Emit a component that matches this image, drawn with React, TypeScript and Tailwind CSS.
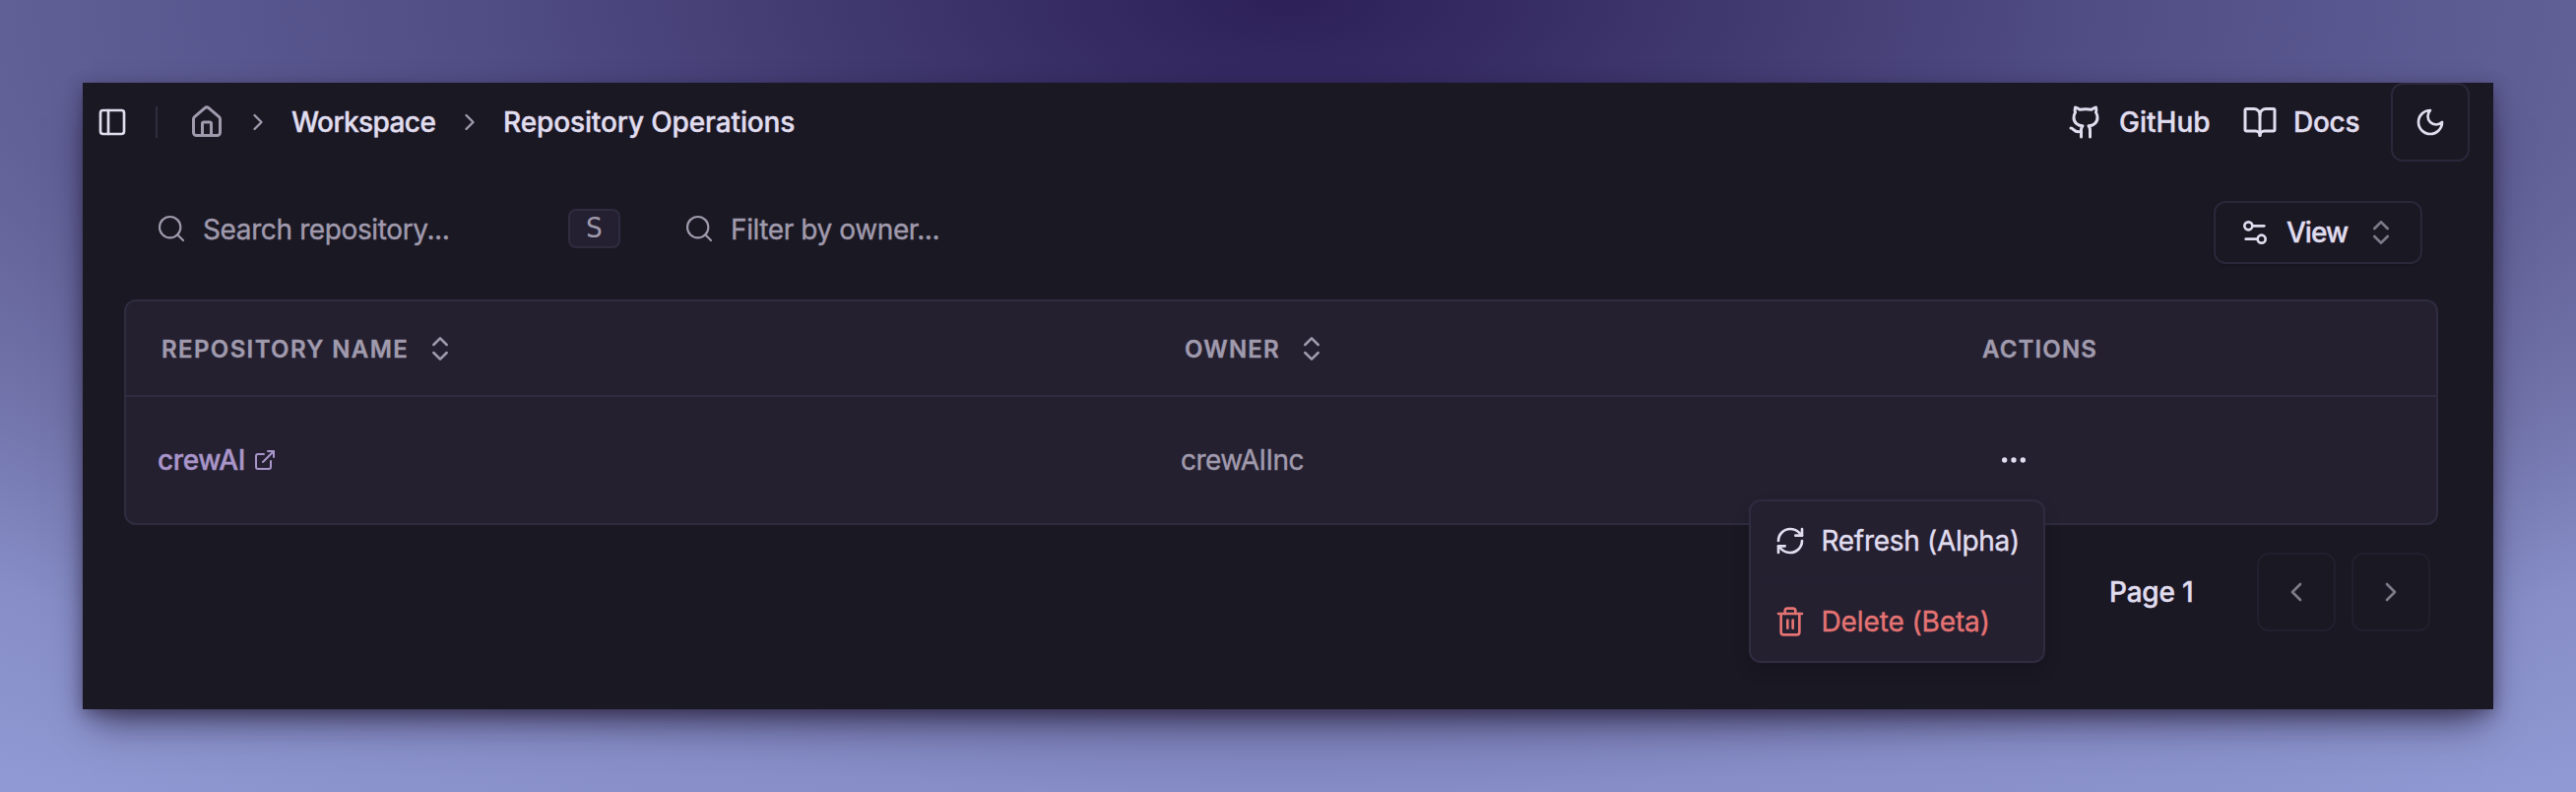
import type { ReactNode } from 'react';
import {
  BookOpen,
  ChevronLeft,
  ChevronRight,
  ChevronsUpDown,
  Ellipsis,
  ExternalLink,
  Github,
  House,
  PanelLeft,
  RefreshCw,
  Search,
  Settings2,
  Trash2,
} from 'lucide-react';

function Moon() {
  return (
    <svg
      viewBox="0 0 24 24"
      fill="none"
      stroke="currentColor"
      strokeWidth="2"
      strokeLinecap="round"
      strokeLinejoin="round"
      className="size-8"
    >
      <path d="M12 3a6 6 0 0 0 9 9 9 9 0 1 1-9-9Z" />
    </svg>
  );
}

function Header() {
  return (
    <header className="flex h-20 items-center justify-between pr-6 pl-3.5 font-medium">
      <div className="flex items-center">
        <PanelLeft className="size-8" />
        <div className="ml-7 h-8 w-0.5 bg-[#302c40]" />
        <nav className="ml-8 flex items-center gap-5">
          <House className="size-9 text-[#a09aad]" />
          <ChevronRight className="size-7 text-[#a09aad]" />
          <span className="w-[147px] tracking-[-0.6px]">Workspace</span>
          <ChevronRight className="size-7 text-[#a09aad]" />
          <span className="tracking-[-0.12px]">Repository Operations</span>
        </nav>
      </div>
      <div className="flex items-center gap-8">
        <a className="flex items-center gap-4">
          <Github className="size-9" />
          <span className="w-[93px]">GitHub</span>
        </a>
        <a className="flex items-center gap-4">
          <BookOpen className="size-9" />
          <span className="w-[67px] tracking-[-0.3px]">Docs</span>
        </a>
        <button className="flex size-20 items-center justify-center rounded-xl border-2 border-[#2a273a]">
          <Moon />
        </button>
      </div>
    </header>
  );
}

function Toolbar() {
  return (
    <div className="mt-10 flex h-16 items-start pr-[72px] pl-[74px]">
      <div className="mt-2 flex h-10 w-[536px] items-center text-[#a09aad]">
        <Search className="size-8" strokeWidth={1.6} />
        <span className="mt-0.5 ml-4 grow tracking-[-0.38px]">Search repository...</span>
        <kbd className="mr-16 flex h-10 w-[53px] items-center justify-center rounded-lg border-2 border-[#302c40] bg-[#242031] pb-0.5 font-['DejaVu_Sans_Mono',monospace] text-[29px] [-webkit-text-stroke:0]">
          S
        </kbd>
      </div>
      <div className="mt-2 flex h-10 grow items-center text-[#a09aad]">
        <Search className="size-8" strokeWidth={1.6} />
        <span className="mt-0.5 ml-4 tracking-[-0.4px]">Filter by owner...</span>
      </div>
      <button className="flex h-16 w-[212px] items-center rounded-xl border-2 border-[#2a273a] px-6 font-medium shadow-sm">
        <Settings2 className="size-8" />
        <span className="ml-4 tracking-[-1px]">View</span>
        <ChevronsUpDown className="ml-auto size-8 opacity-50" />
      </button>
    </div>
  );
}

function HeadCell({ children, sortable = false }: { children: ReactNode; sortable?: boolean }) {
  return (
    <div className="flex items-center gap-4 whitespace-nowrap">
      {children}
      {sortable && <ChevronsUpDown className="size-8" strokeWidth={1.9} />}
    </div>
  );
}

function RepositoryTable() {
  return (
    <div className="mx-[42px] mr-14 mt-9 overflow-hidden rounded-xl border-2 border-[#302c40] bg-[#242030] text-[#a09aad]">
      <div className="grid h-[97px] grid-cols-[1039px_810px_1fr] border-b-2 border-[#302c40] pl-9 text-[24px] font-semibold">
        <HeadCell sortable>
          <span className="w-[251px] pt-0.5 tracking-[1.38px]">REPOSITORY NAME</span>
        </HeadCell>
        <HeadCell sortable>
          <span className="w-[97px] pt-0.5 tracking-[1.2px]">OWNER</span>
        </HeadCell>
        <HeadCell>
          <span className="pt-0.5 tracking-[1.15px]">ACTIONS</span>
        </HeadCell>
      </div>
      <div className="grid h-32 grid-cols-[1039px_830px_1fr] items-center pl-8">
        <a className="flex items-center gap-2 text-[#a995c9]">
          <span className="w-[89px] font-medium tracking-[-0.38px]">crewAI</span>
          <ExternalLink className="size-6" />
        </a>
        <span className="tracking-[-0.54px]">crewAIInc</span>
        <Ellipsis className="size-8 text-[#e0ddef]" />
      </div>
    </div>
  );
}

function RowMenu() {
  return (
    <div className="absolute top-[423px] left-[1692px] flex h-[166px] w-[301px] flex-col rounded-xl border-2 border-[#302c40] bg-[#242030] p-2 shadow-[0_8px_16px_rgba(0,0,0,0.15)]">
      <div className="flex h-16 items-center gap-[15.5px] px-4">
        <RefreshCw className="size-8 shrink-0" />
        <span className="whitespace-nowrap tracking-[-0.3px]">Refresh (Alpha)</span>
      </div>
      <div className="my-2 h-0.5 bg-[#242031]" />
      <div className="flex h-16 items-center gap-[15.5px] px-4 text-[#e57373]">
        <Trash2 className="size-8 shrink-0" />
        <span className="whitespace-nowrap tracking-[-0.12px]">Delete (Beta)</span>
      </div>
    </div>
  );
}

function Pagination() {
  return (
    <div className="mt-7 flex items-center justify-end gap-4 pr-16">
      <span className="mr-[47px] w-[88px] pl-px font-medium tracking-[-0.2px]">Page 1</span>
      <button className="flex size-20 items-center justify-center rounded-xl border-2 border-[#2a273a] opacity-50">
        <ChevronLeft className="size-8" />
      </button>
      <button className="flex size-20 items-center justify-center rounded-xl border-2 border-[#2a273a] opacity-50">
        <ChevronRight className="size-8" />
      </button>
    </div>
  );
}

export default function App() {
  return (
    <div className="h-[804px] w-[2616px] overflow-hidden bg-[radial-gradient(ellipse_1900px_800px_at_50%_0,#2c2057_0%,#332860_8%,#40396f_24%,#514e86_44%,#605f96_69%,#7072a8_84%,#868dc7_101%,#919ad4_122%)] p-[84px] font-['Inter',sans-serif] text-[28px] leading-10 text-[#e0ddef] [-webkit-text-stroke:0.4px]">
      <main className="relative h-[636px] bg-[#1a1823] shadow-[0_22px_36px_-10px_rgba(20,8,30,0.6),0_4px_16px_rgba(20,8,30,0.35)]">
        <Header />
        <Toolbar />
        <RepositoryTable />
        <Pagination />
        <RowMenu />
      </main>
    </div>
  );
}
